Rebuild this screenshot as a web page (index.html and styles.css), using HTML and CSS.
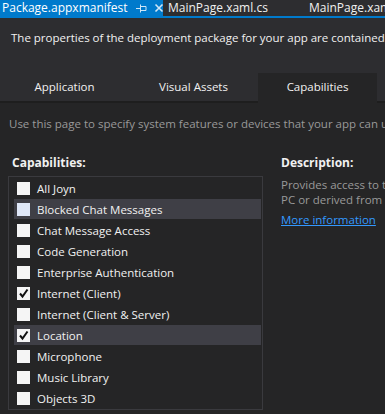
FILE: index.html
```html
<!DOCTYPE html>
<html lang="en">
<head>
    <meta charset="UTF-8">
    <meta name="viewport" content="width=device-width, initial-scale=1.0">
    <title>Package.appxmanifest</title>
    <link rel="stylesheet" href="styles.css">
</head>
<body>
    <div class="doc-tabs">
        <div class="doc-tab active">
            <span>Package.appxmanifest</span>
            <svg class="pin" width="11" height="10" viewBox="0 0 11 10"><path d="M0 5.5h4.5M4.5 1.5v8M4.5 3.5h5.5v4h-5.5" stroke="#cfe6f7" stroke-width="1" fill="none"/></svg>
            <svg class="close" width="10" height="10" viewBox="0 0 10 10"><path d="M1.5 1.5l7 7M8.5 1.5l-7 7" stroke="#cfe6f7" stroke-width="1.6"/></svg>
        </div>
        <div class="doc-tab">MainPage.xaml.cs</div>
        <div class="doc-tab">MainPage.xaml</div>
    </div>
    <div class="doc-line"></div>
    <div class="header">
        <p>The properties of the deployment package for your app are contained in the app manifest file.</p>
    </div>
    <div class="page-tabs">
        <div class="page-tab">Application</div>
        <div class="page-tab">Visual Assets</div>
        <div class="page-tab selected">Capabilities</div>
    </div>
    <div class="content">
        <p class="intro">Use this page to specify system features or devices that your app can use.</p>
        <div class="columns">
            <div class="caps">
                <h3>Capabilities:</h3>
                <div class="cap-list">
                    <div class="cap"><span class="box"></span>All Joyn</div>
                    <div class="cap hover"><span class="box"></span>Blocked Chat Messages</div>
                    <div class="cap"><span class="box"></span>Chat Message Access</div>
                    <div class="cap"><span class="box"></span>Code Generation</div>
                    <div class="cap"><span class="box"></span>Enterprise Authentication</div>
                    <div class="cap"><span class="box checked"><svg width="13" height="13" viewBox="0 0 13 13"><path d="M3 6.5l2.5 3L10.5 2.5" stroke="#111" stroke-width="2" fill="none"/></svg></span>Internet (Client)</div>
                    <div class="cap"><span class="box"></span>Internet (Client &amp; Server)</div>
                    <div class="cap selected"><span class="box checked"><svg width="13" height="13" viewBox="0 0 13 13"><path d="M3 6.5l2.5 3L10.5 2.5" stroke="#111" stroke-width="2" fill="none"/></svg></span>Location</div>
                    <div class="cap"><span class="box"></span>Microphone</div>
                    <div class="cap"><span class="box"></span>Music Library</div>
                    <div class="cap"><span class="box"></span>Objects 3D</div>
                </div>
            </div>
            <div class="desc">
                <h3>Description:</h3>
                <p>Provides access to the user's current location, either from the</p>
                <p>PC or derived from available network sources.</p>
                <a href="#">More information</a>
            </div>
        </div>
    </div>
</body>
</html>
```

FILE: styles.css
```css
body {
    margin: 0;
    width: 385px;
    height: 414px;
    overflow: hidden;
    background-color: #252526;
    color: #f1f1f1;
    font-family: "Open Sans", "Noto Sans", sans-serif;
    font-size: 11.5px;
    white-space: nowrap;
}
p {
    margin: 0;
}
.doc-tabs {
    display: flex;
    height: 16px;
    background-color: #2d2d30;
    line-height: 16px;
    font-size: 12px;
}
.doc-tab {
    flex-shrink: 0;
    padding: 0 2px;
    color: #f1f1f1;
}
.doc-tab:nth-child(2) {
    width: 137px;
    padding-left: 5px;
}
.doc-tab.active {
    display: flex;
    align-items: center;
    width: 159px;
    background-color: #007acc;
    color: #ffffff;
}
.doc-tab.active span {
    margin-right: 8px;
}
.doc-tab svg {
    flex-shrink: 0;
}
.doc-tab .pin {
    margin-right: 7px;
}
.doc-line {
    height: 2px;
    background-color: #007acc;
}
.header {
    height: 55px;
    padding-left: 11px;
    background-color: #2d2d30;
}
.header p {
    padding-top: 12px;
}
.page-tabs {
    display: flex;
    height: 28px;
    background-color: #2d2d30;
    border-bottom: 2px solid #1e1e1e;
}
.page-tab {
    width: 129px;
    text-align: center;
    line-height: 28px;
}
.page-tab.selected {
    width: 119px;
    background-color: #252526;
    border-bottom: 2px solid #252526;
    margin-bottom: -2px;
}
.content {
    padding: 13px 0 0 9px;
}
.intro {
    color: #999999;
}
.columns {
    display: flex;
    gap: 18px;
    margin-top: 23px;
}
h3 {
    margin: 0;
    font-size: 12px;
    font-weight: bold;
    padding-left: 3px;
}
.caps {
    flex-shrink: 0;
    width: 254px;
}
.cap-list {
    margin-top: 5px;
    margin-left: -1px;
    border: 1px solid #3a3a3e;
    padding: 1px 1px 0 5px;
}
.cap {
    display: flex;
    align-items: center;
    height: 20px;
    margin-bottom: 1px;
    padding-left: 3px;
}
.cap.hover,
.cap.selected {
    background-color: #3f3f46;
}
.box {
    width: 13px;
    height: 13px;
    margin-right: 7px;
    background-color: #f5f5f5;
}
.cap.hover .box {
    background-color: #dfe7f7;
}
.desc h3 {
    padding-left: 0;
}
.desc p {
    color: #999999;
    line-height: 15px;
}
.desc h3 + p {
    margin-top: 6px;
}
.desc a {
    display: inline-block;
    margin-top: 5px;
    color: #3399ff;
}
```
